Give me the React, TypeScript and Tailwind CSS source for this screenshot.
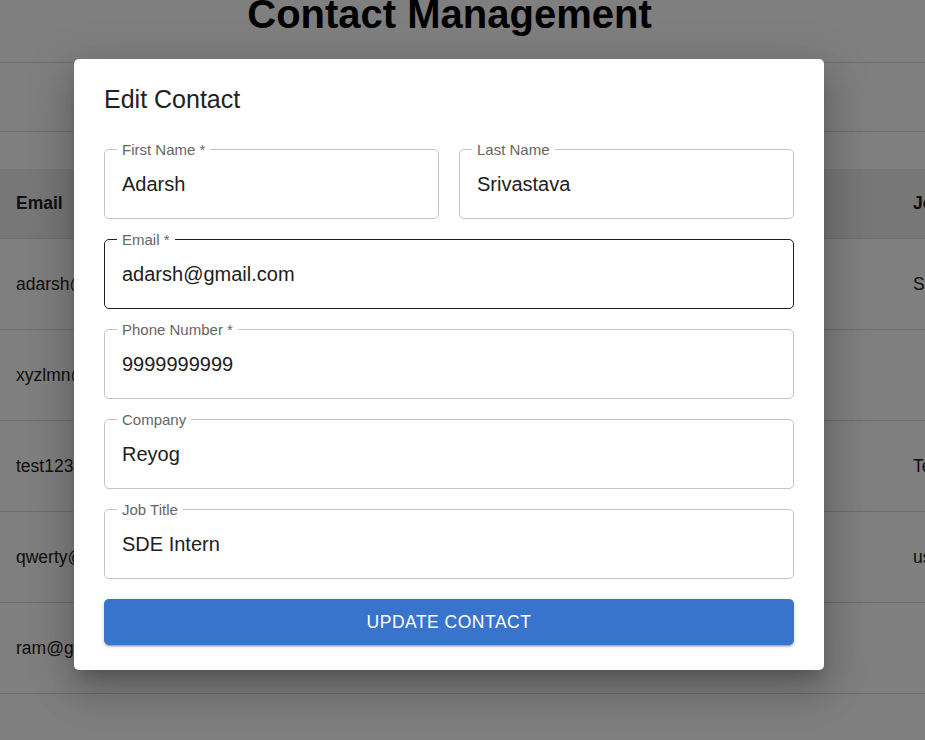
import React from 'react';

interface Contact {
  email: string;
  phone: string;
  company: string;
  jobTitle: string;
}

const contacts: Contact[] = [
  { email: 'adarsh@gmail.com', phone: '9999999999', company: 'Reyog', jobTitle: 'SDE Intern' },
  { email: 'xyzlmn@gmail.com', phone: '8888888888', company: '', jobTitle: '' },
  { email: 'test123@gmail.com', phone: '7777777777', company: 'Test Co', jobTitle: 'Tester' },
  { email: 'qwerty@gmail.com', phone: '6666666666', company: 'Qwerty', jobTitle: 'user' },
  { email: 'ram@gmail.com', phone: '5555555555', company: '', jobTitle: '' },
];

const Field: React.FC<{ label: string; value: string; required?: boolean; active?: boolean }> = ({
  label,
  value,
  required,
  active,
}) => (
  <div
    className={`relative h-[70px] rounded-[5px] border flex items-center px-[17px] ${
      active ? 'border-[#1f1f1f]' : 'border-[#c4c4c4]'
    }`}
  >
    <span className="absolute left-[12px] top-0 -translate-y-1/2 bg-white px-[5px] text-[15px] leading-[18px] text-[#666666]">
      {label}
      {required && ' *'}
    </span>
    <span className="text-[20px] text-[#212121]">{value}</span>
  </div>
);

const App: React.FC = () => {
  return (
    <div className="relative w-[925px] h-[740px] overflow-hidden bg-white text-[#212121] font-['Liberation_Sans',Arial,sans-serif]">
      {/* page behind the dialog */}
      <div className="w-[899px] -mt-[6px]">
        <h1 className="text-center text-[40px] leading-[40px] font-bold text-black">Contact Management</h1>
      </div>
      <div className="mt-[28px] h-[70px] border-y border-[#d8d8d8]" />

      <div className="mt-[37px] w-[1100px]">
        <div className="flex h-[70px] items-center bg-[#eeeeee] border-b border-[#d8d8d8] text-[17.5px] font-bold">
          <div className="w-[300px] px-4">Email</div>
          <div className="w-[300px] px-4">Phone Number</div>
          <div className="w-[297px] px-4">Company</div>
          <div className="w-[200px] px-4">Job Title</div>
        </div>
        {contacts.map(c => (
          <div key={c.email} className="flex h-[91px] items-center border-b border-[#d8d8d8] text-[17.5px]">
            <div className="w-[300px] px-4">{c.email}</div>
            <div className="w-[300px] px-4">{c.phone}</div>
            <div className="w-[297px] px-4">{c.company}</div>
            <div className="w-[200px] px-4">{c.jobTitle}</div>
          </div>
        ))}
      </div>

      {/* backdrop + dialog */}
      <div className="absolute inset-0 bg-black/50 pl-[74px] pt-[59px]">
        <div className="w-[750px] rounded-[5px] bg-white shadow-[0_11px_15px_-7px_rgba(0,0,0,0.2),0_24px_38px_3px_rgba(0,0,0,0.14),0_9px_46px_8px_rgba(0,0,0,0.12)]">
          <h2 className="px-[30px] pt-[20px] pb-[20px] text-[25px] leading-[40px] text-[#212121]">Edit Contact</h2>
          <div className="px-[30px] pt-[10px] pb-[25px] flex flex-col gap-[20px]">
            <div className="grid grid-cols-2 gap-[20px]">
              <Field label="First Name" value="Adarsh" required />
              <Field label="Last Name" value="Srivastava" />
            </div>
            <Field label="Email" value="adarsh@gmail.com" required active />
            <Field label="Phone Number" value="9999999999" required />
            <Field label="Company" value="Reyog" />
            <Field label="Job Title" value="SDE Intern" />
            <button className="h-[46px] rounded-[5px] bg-[#3874cb] text-white text-[17.5px] font-medium uppercase tracking-[0.5px] shadow-[0_3px_1px_-2px_rgba(0,0,0,0.2),0_2px_2px_0_rgba(0,0,0,0.14),0_1px_5px_0_rgba(0,0,0,0.12)]">
              Update Contact
            </button>
          </div>
        </div>
      </div>
    </div>
  );
};

export default App;
